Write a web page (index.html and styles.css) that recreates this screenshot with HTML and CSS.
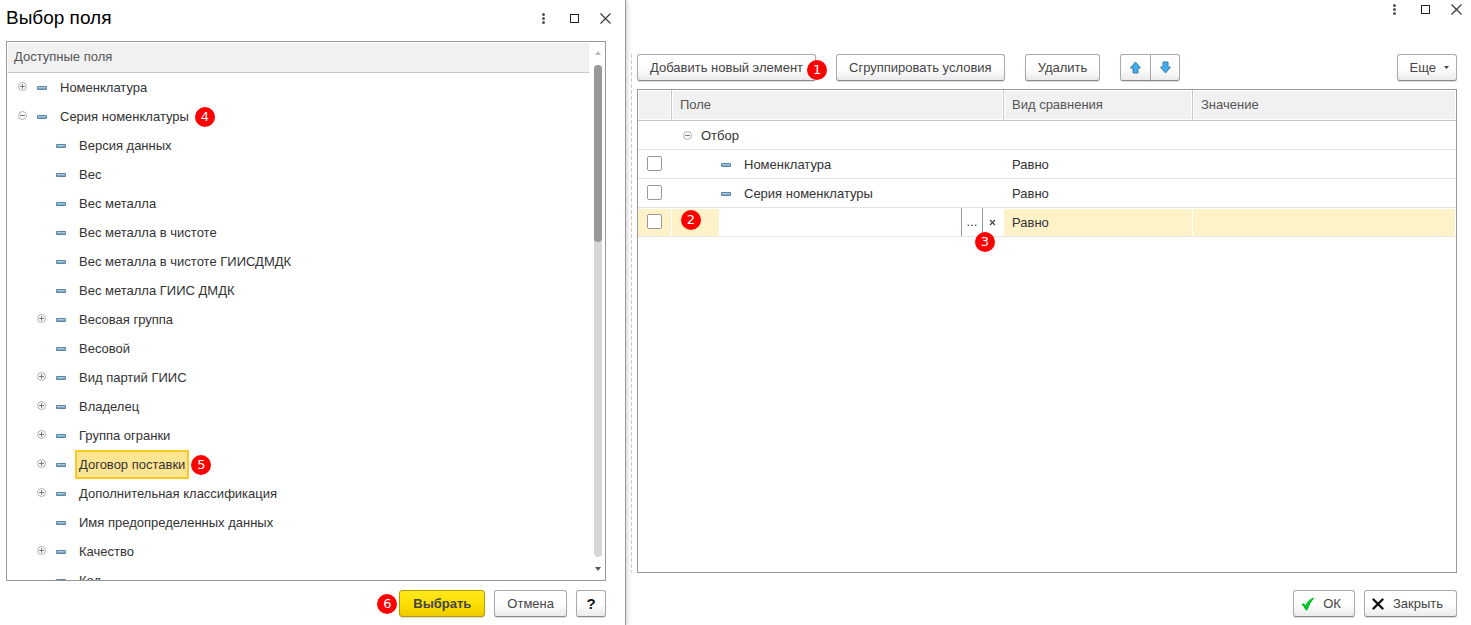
FILE: index.html
```html
<!DOCTYPE html>
<html lang="ru">
<head>
<meta charset="utf-8">
<title>Выбор поля</title>
<link rel="stylesheet" href="styles.css">
</head>
<body>
<svg class="defs" aria-hidden="true">
  <defs>
    <symbol id="field" viewBox="0 0 10 4"><rect width="10" height="4" rx="1" fill="#5b87a6"/><rect x="1" y="1" width="8" height="1" fill="#a8c8dd"/><rect x="1" y="2" width="8" height="1" fill="#83aac5"/></symbol>
    <symbol id="plus" viewBox="0 0 9 9"><circle cx="4.5" cy="4.5" r="4" fill="#fff" stroke="#b0b0b0"/><path d="M2 4.5h5M4.5 2v5" stroke="#777"/></symbol>
    <symbol id="minus" viewBox="0 0 9 9"><circle cx="4.5" cy="4.5" r="4" fill="#fff" stroke="#b0b0b0"/><path d="M2 4.5h5" stroke="#777"/></symbol>
    <symbol id="dots" viewBox="0 0 11 11"><g fill="#555"><circle cx="5.5" cy="1.5" r="1.500"/><circle cx="5.5" cy="5.5" r="1.500"/><circle cx="5.5" cy="9.5" r="1.500"/></g></symbol>
    <symbol id="max" viewBox="0 0 11 11"><rect x="1.5" y="1.5" width="8" height="8" fill="none" stroke="#222"/></symbol>
    <symbol id="close" viewBox="0 0 11 11"><path d="M.5 .5l10 10M10.5 .5l-10 10" stroke="#333" stroke-width="1.1"/></symbol>
  </defs>
</svg>

<section class="dialog">
  <header class="dialog-head">
    <h1>Выбор поля</h1>
    <div class="window-tools">
      <button type="button" aria-label="Меню"><svg><use href="#dots"/></svg></button>
      <button type="button" aria-label="Развернуть"><svg><use href="#max"/></svg></button>
      <button type="button" aria-label="Закрыть окно"><svg><use href="#close"/></svg></button>
    </div>
  </header>
  <div class="tree">
    <div class="tree-main">
      <div class="tree-title">Доступные поля</div>
      <ul class="tree-list">
        <li><svg class="tog"><use href="#plus"/></svg><svg class="bar"><use href="#field"/></svg><span>Номенклатура</span></li>
        <li><svg class="tog"><use href="#minus"/></svg><svg class="bar"><use href="#field"/></svg><span>Серия номенклатуры</span><b class="badge">4</b></li>
        <li class="sub leaf"><svg class="bar"><use href="#field"/></svg><span>Версия данных</span></li>
        <li class="sub leaf"><svg class="bar"><use href="#field"/></svg><span>Вес</span></li>
        <li class="sub leaf"><svg class="bar"><use href="#field"/></svg><span>Вес металла</span></li>
        <li class="sub leaf"><svg class="bar"><use href="#field"/></svg><span>Вес металла в чистоте</span></li>
        <li class="sub leaf"><svg class="bar"><use href="#field"/></svg><span>Вес металла в чистоте ГИИСДМДК</span></li>
        <li class="sub leaf"><svg class="bar"><use href="#field"/></svg><span>Вес металла ГИИС ДМДК</span></li>
        <li class="sub"><svg class="tog"><use href="#plus"/></svg><svg class="bar"><use href="#field"/></svg><span>Весовая группа</span></li>
        <li class="sub leaf"><svg class="bar"><use href="#field"/></svg><span>Весовой</span></li>
        <li class="sub"><svg class="tog"><use href="#plus"/></svg><svg class="bar"><use href="#field"/></svg><span>Вид партий ГИИС</span></li>
        <li class="sub"><svg class="tog"><use href="#plus"/></svg><svg class="bar"><use href="#field"/></svg><span>Владелец</span></li>
        <li class="sub"><svg class="tog"><use href="#plus"/></svg><svg class="bar"><use href="#field"/></svg><span>Группа огранки</span></li>
        <li class="sub current"><svg class="tog"><use href="#plus"/></svg><svg class="bar"><use href="#field"/></svg><span>Договор поставки</span><b class="badge">5</b></li>
        <li class="sub"><svg class="tog"><use href="#plus"/></svg><svg class="bar"><use href="#field"/></svg><span>Дополнительная классификация</span></li>
        <li class="sub leaf"><svg class="bar"><use href="#field"/></svg><span>Имя предопределенных данных</span></li>
        <li class="sub"><svg class="tog"><use href="#plus"/></svg><svg class="bar"><use href="#field"/></svg><span>Качество</span></li>
        <li class="sub leaf"><svg class="bar"><use href="#field"/></svg><span>Код</span></li>
      </ul>
    </div>
    <div class="scroll">
      <svg class="scroll-arrow" viewBox="0 0 6 4"><path d="M3 0l3 4H0z" fill="#b9b9b9"/></svg>
      <div class="track"><div class="thumb"></div></div>
      <svg class="scroll-arrow" viewBox="0 0 6 4"><path d="M0 0h6L3 4z" fill="#555"/></svg>
    </div>
  </div>
  <footer class="actions">
    <b class="badge">6</b>
    <button type="button" class="btn primary">Выбрать</button>
    <button type="button" class="btn">Отмена</button>
    <button type="button" class="btn help">?</button>
  </footer>
</section>

<main class="pane">
  <div class="window-tools">
    <button type="button" aria-label="Меню"><svg><use href="#dots"/></svg></button>
    <button type="button" aria-label="Развернуть"><svg><use href="#max"/></svg></button>
    <button type="button" aria-label="Закрыть окно"><svg><use href="#close"/></svg></button>
  </div>
  <div class="work">
    <div class="splitter"></div>
    <div class="filter">
      <div class="toolbar">
        <button type="button" class="btn marked">Добавить новый элемент<b class="badge">1</b></button>
        <button type="button" class="btn">Сгруппировать условия</button>
        <button type="button" class="btn">Удалить</button>
        <div class="pair">
          <button type="button" class="btn" aria-label="Вверх"><svg viewBox="0 0 13 13"><path d="M6.5 1l5 6H9v5H4V7H1.500z" fill="#41aef0" stroke="#3a7ca8"/></svg></button>
          <button type="button" class="btn" aria-label="Вниз"><svg viewBox="0 0 13 13"><path d="M6.500 12l5-6H9V1H4v5H1.500z" fill="#41aef0" stroke="#3a7ca8"/></svg></button>
        </div>
        <button type="button" class="btn more">Еще<svg viewBox="0 0 5 3"><path d="M0 0h5L2.500 3z" fill="#444"/></svg></button>
      </div>
      <div class="grid">
        <table>
          <colgroup><col class="c-check"><col class="c-field"><col class="c-kind"><col></colgroup>
          <thead><tr><th></th><th>Поле</th><th>Вид сравнения</th><th>Значение</th></tr></thead>
          <tbody>
            <tr><td></td><td><div class="group"><svg class="tog"><use href="#minus"/></svg><span>Отбор</span></div></td><td></td><td></td></tr>
            <tr><td class="check"><input type="checkbox" aria-label="Номенклатура"></td><td><div class="item"><svg class="bar"><use href="#field"/></svg><span>Номенклатура</span></div></td><td>Равно</td><td></td></tr>
            <tr><td class="check"><input type="checkbox" aria-label="Серия номенклатуры"></td><td><div class="item"><svg class="bar"><use href="#field"/></svg><span>Серия номенклатуры</span></div></td><td>Равно</td><td></td></tr>
            <tr class="active"><td class="check"><input type="checkbox" aria-label="Новый элемент"></td><td class="edit"><div class="editor"><span class="indent"><b class="badge">2</b></span><input type="text" aria-label="Поле"><button type="button" aria-label="Выбрать поле">...</button><button type="button" aria-label="Очистить"><svg viewBox="0 0 7 7"><path d="M1 1l5 5M6 1L1 6" stroke="#444" stroke-width="1.200"/></svg><b class="badge">3</b></button></div></td><td>Равно</td><td></td></tr>
          </tbody>
        </table>
      </div>
    </div>
  </div>
  <footer class="actions">
    <button type="button" class="btn ok"><svg viewBox="0 0 14 14"><path d="M1 7.500Q3 5.500 4.500 8.500Q7.500 2.500 12.500 1Q8.500 6 6 13H5Q3 9 1 7.500z" fill="#0ac42a" stroke="#0ac42a"/></svg>ОК</button>
    <button type="button" class="btn cancel"><svg viewBox="0 0 12 12"><path d="M1.500 1.500l9 9M10.500 1.500l-9 9" stroke="#111" stroke-width="2.400" stroke-linecap="round"/></svg>Закрыть</button>
  </footer>
</main>
</body>
</html>
```

FILE: styles.css
```css
* { box-sizing: border-box; }

body {
  margin: 0;
  min-height: 100vh;
  display: flex;
  background: #fff;
  color: #333;
  font: 13px/16px "Liberation Sans", Arial, sans-serif;
}

svg { display: block; flex: none; }
button, input { font: inherit; color: inherit; }
.defs { position: absolute; width: 0; height: 0; }

.dialog {
  flex: 0 0 626px;
  height: 100vh;
  display: flex;
  flex-direction: column;
  padding: 0 19px 8px 6px;
  border-right: 1px solid #999;
  box-shadow: 1px 0 5px rgba(0, 0, 0, .2);
}

.dialog-head {
  flex: 0 0 41px;
  display: flex;
  justify-content: space-between;
  align-items: flex-start;
  padding-top: 7px;
}

h1 {
  margin: 0;
  font-size: 19px;
  line-height: 22px;
  font-weight: normal;
  color: #000;
}

.window-tools { display: flex; gap: 20px; }
.window-tools button { padding: 0; border: 0; background: none; }
.window-tools svg { width: 11px; height: 11px; }
.dialog-head .window-tools { padding: 6px 0 0; margin-right: -5px; }

.tree {
  flex: 1;
  min-height: 0;
  display: flex;
  border: 1px solid #999;
}

.tree-main { flex: 1; overflow: hidden; }

.tree-title {
  height: 31px;
  padding: 6px;
  border: 1px solid #fff;
  border-bottom: 1px solid #c8c8c8;
  background: #f1f1f1;
  color: #555;
}

.tree-list { margin: 0; padding: 0; list-style: none; }

.tree-list li {
  display: flex;
  align-items: center;
  height: 29px;
  padding-left: 11px;
}

.tree-list .sub { padding-left: 30px; }
.tree-list .leaf { padding-left: 49px; }
.tog { width: 9px; height: 9px; margin: 0 10px 2px 0; }
.bar { width: 10px; height: 4px; }
.tree-list .bar { margin-right: 9px; }

.tree-list span {
  height: 29px;
  padding: 5px 2px;
  border: 2px solid transparent;
}

.tree-list .current span { border-color: #fbc926; background: #fee592; }

.badge {
  flex: none;
  width: 20px;
  height: 20px;
  border-radius: 50%;
  background: #f00;
  color: #fff;
  font: 13px/20px "DejaVu Sans", sans-serif;
  text-align: center;
}

.tree-list .badge { margin-left: 2px; }

.scroll {
  flex: 0 0 15px;
  display: flex;
  flex-direction: column;
  align-items: center;
  padding: 9px 0;
}

.scroll-arrow { width: 6px; height: 4px; }

.track {
  flex: 1;
  width: 8px;
  margin: 10px 0;
  border-radius: 4px;
  background: #d6d6d6;
}

.thumb { height: 36%; border-radius: 4px; background: #999; }

.actions {
  display: flex;
  justify-content: flex-end;
  align-items: center;
  gap: 9px;
  padding-top: 9px;
}

.actions .badge { margin-right: -7px; }

.btn {
  display: flex;
  align-items: center;
  justify-content: center;
  height: 27px;
  padding: 0 12px;
  border: 1px solid #aaa;
  border-bottom-color: #888;
  border-radius: 3px;
  background: linear-gradient(#fff 50%, #ebebeb);
  box-shadow: 0 1px 1px rgba(0, 0, 0, .15);
  color: #444;
  white-space: nowrap;
}

.primary {
  padding: 0 13px;
  border-color: #b59b00;
  background: linear-gradient(#ffea1c, #fbdc00 60%, #edcb00);
  font-weight: bold;
}

.help { width: 30px; padding: 0; font-size: 15px; font-weight: bold; color: #111; }

.pane {
  flex: 1;
  min-width: 0;
  display: flex;
  flex-direction: column;
  padding: 4px 14px 8px 0;
}

.pane > .window-tools { flex: 0 0 50px; align-items: flex-start; justify-content: flex-end; margin-right: -5px; }
.pane > .actions { padding-top: 17px; }

.work { flex: 1; display: flex; }

.splitter {
  flex: 0 0 1px;
  margin: 0 5px;
  background: repeating-linear-gradient(#ccc 0 4px, #fff 4px 6px);
}

.filter { flex: 1; min-width: 0; display: flex; flex-direction: column; gap: 8px; }
.toolbar { display: flex; gap: 20px; }
.marked { position: relative; }
.marked .badge { position: absolute; right: -12px; top: 5px; }
.pair { display: flex; }
.pair .btn { width: 31px; padding: 0; }
.pair .btn:first-child { border-radius: 3px 0 0 3px; }
.pair .btn:last-child { width: 30px; margin-left: -1px; border-radius: 0 3px 3px 0; }
.pair svg { width: 13px; height: 13px; }
.more { margin-left: auto; padding: 0 7px 0 12px; gap: 8px; }
.more svg { width: 5px; height: 3px; }

.grid { flex: 1; border: 1px solid #999; }

table { width: 100%; table-layout: fixed; border-collapse: separate; border-spacing: 0; }
.c-check { width: 34px; }
.c-field { width: 332px; }
.c-kind { width: 189px; }

th {
  height: 31px;
  padding: 0 8px;
  border-right: 1px solid #c8c8c8;
  border-bottom: 1px solid #c8c8c8;
  background: #f1f1f1;
  box-shadow: inset 0 0 0 1px #fff;
  text-align: left;
  font-weight: normal;
  color: #555;
}

th:last-child { border-right: 0; }
td { height: 29px; padding: 2px 8px 0; border-bottom: 1px solid #e3e3e3; }
td.check { padding: 0 0 2px 9px; }

.check input {
  display: block;
  appearance: none;
  width: 15px;
  height: 15px;
  margin: 0;
  border: 1px solid #999;
  border-radius: 2px;
  background: #fff;
}

.group, .item { display: flex; align-items: center; }
.group { padding-left: 3px; }
.group .tog { margin-right: 9px; }
.item { padding-left: 41px; gap: 13px; }
.active td { background: #fef2c8; box-shadow: inset -1px 1px #fff; }
.active .edit { padding: 0; background: #fff; }
.editor { display: flex; height: 28px; }
.indent { flex: 0 0 47px; margin-top: 1px; padding: 1px 9px; background: #fef2c8; }
.indent .badge { display: block; }
.editor input { flex: 1; min-width: 0; padding: 0 4px; border: 0; background: #fff; outline: 0; }

.editor button {
  position: relative;
  display: flex;
  align-items: center;
  justify-content: center;
  flex: 0 0 21px;
  padding: 0;
  border: 0;
  border-left: 1px solid #999;
  background: #fff;
}

.editor button:last-child { flex-basis: 22px; padding-right: 2px; }
.editor button svg { width: 7px; height: 7px; }
.editor button .badge { position: absolute; left: -8px; top: 24px; }
.ok { padding: 0 13px 0 7px; gap: 8px; }
.ok svg { width: 14px; height: 14px; }
.cancel { padding: 0 13px 0 7px; gap: 9px; }
.cancel svg { width: 12px; height: 12px; }
```
